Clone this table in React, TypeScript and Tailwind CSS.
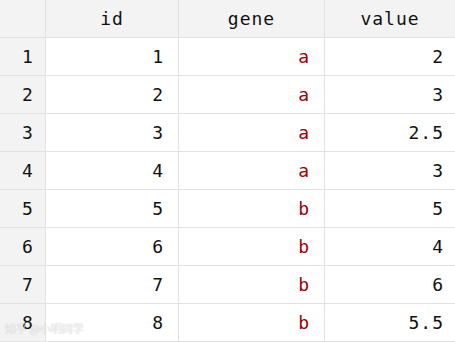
import React from 'react';

const rows = [
  { id: '1', gene: 'a', value: '2' },
  { id: '2', gene: 'a', value: '3' },
  { id: '3', gene: 'a', value: '2.5' },
  { id: '4', gene: 'a', value: '3' },
  { id: '5', gene: 'b', value: '5' },
  { id: '6', gene: 'b', value: '4' },
  { id: '7', gene: 'b', value: '6' },
  { id: '8', gene: 'b', value: '5.5' },
];

export default function App() {
  return (
    <div
      className="relative w-[455px] h-[342px] overflow-hidden bg-[#e2e2e2] text-[18px] tracking-[1px] text-[#111111]"
      style={{ fontFamily: '"DejaVu Sans Mono", "Liberation Mono", monospace' }}
    >
      <div className="grid grid-cols-[45px_132px_145px_130px] auto-rows-[37px] gap-px">
        {/* header */}
        <div className="bg-[#f3f3f3]" />
        <div className="bg-[#f3f3f3] flex items-center justify-center">id</div>
        <div className="bg-[#f3f3f3] flex items-center justify-center">gene</div>
        <div className="bg-[#f3f3f3] flex items-center justify-center">value</div>

        {rows.map((r, i) => (
          <React.Fragment key={i}>
            <div className="bg-[#f3f3f3] flex items-center pl-[22px]">{i + 1}</div>
            <div className="bg-white flex items-center justify-end pr-[14px]">{r.id}</div>
            <div className="bg-white flex items-center justify-end pr-[14px] text-[#a00000]">{r.gene}</div>
            <div className="bg-white flex items-center justify-end pr-[11px]">{r.value}</div>
          </React.Fragment>
        ))}
      </div>

      {/* faint watermark */}
      <div
        className="absolute left-[5px] bottom-[6px] text-[11px] tracking-normal text-white/80 [text-shadow:0_0_1px_rgba(0,0,0,0.3)]"
        style={{ fontFamily: '"Noto Sans CJK SC", sans-serif' }}
      >
        知乎 @小明同学
      </div>
    </div>
  );
}
